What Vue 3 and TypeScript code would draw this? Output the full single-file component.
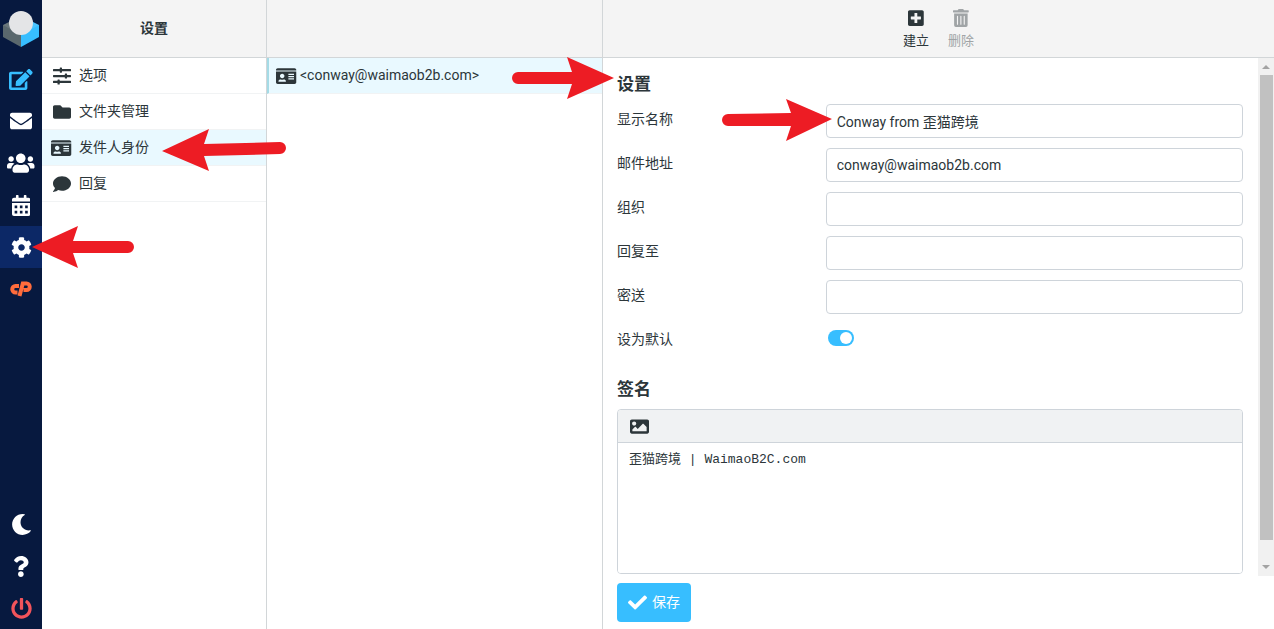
<script setup lang="ts">
import { ref } from 'vue'

interface Icon {
  w: number
  d: string
}

interface MenuEntry {
  label: string
  icon: string
}

interface Field {
  id: string
  label: string
  value: string
}

const icons: Record<string, Icon> = {
  edit: { w: 576, d: 'M402.6 83.2l90.2 90.2c3.8 3.8 3.8 10 0 13.8L274.4 405.6l-92.8 10.3c-12.4 1.4-22.9-9.1-21.5-21.5l10.3-92.8L388.8 83.2c3.8-3.8 10-3.8 13.8 0zm162-22.9l-48.8-48.8c-15.2-15.2-39.9-15.2-55.2 0l-35.4 35.4c-3.8 3.8-3.8 10 0 13.8l90.2 90.2c3.8 3.8 10 3.8 13.8 0l35.4-35.4c15.2-15.3 15.2-40 0-55.2zM384 346.2V448H64V128h229.8c3.2 0 6.2-1.3 8.5-3.5l40-40c7.6-7.6 2.2-20.5-8.5-20.5H48C21.5 64 0 85.5 0 112v352c0 26.5 21.5 48 48 48h352c26.5 0 48-21.5 48-48V306.2c0-10.7-12.9-16-20.5-8.5l-40 40c-2.2 2.3-3.5 5.3-3.5 8.5z' },
  mail: { w: 512, d: 'M502.3 190.8c3.9-3.1 9.7-.2 9.7 4.7V400c0 26.5-21.5 48-48 48H48c-26.5 0-48-21.5-48-48V195.6c0-5 5.7-7.8 9.7-4.7 22.4 17.4 52.1 39.5 154.1 113.6 21.1 15.4 56.7 47.8 92.2 47.6 35.7.3 72-32.8 92.3-47.6 102-74.1 131.6-96.3 154-113.7zM256 320c23.2.4 56.6-29.2 73.4-41.4 132.7-96.3 142.8-104.7 173.4-128.7 5.8-4.5 9.2-11.5 9.2-18.9v-19c0-26.5-21.5-48-48-48H48c-26.5 0-48 21.5-48 48v19c0 7.4 3.4 14.3 9.2 18.9 30.6 23.9 40.7 32.4 173.4 128.7 16.8 12.2 50.2 41.8 73.4 41.4z' },
  users: { w: 640, d: 'M96 224c35.3 0 64-28.7 64-64s-28.7-64-64-64-64 28.7-64 64 28.7 64 64 64zm448 0c35.3 0 64-28.7 64-64s-28.7-64-64-64-64 28.7-64 64 28.7 64 64 64zm32 32h-64c-17.6 0-33.5 7.1-45.1 18.6 40.3 22.1 68.9 62 75.1 109.4h66c17.7 0 32-14.3 32-32v-32c0-35.3-28.7-64-64-64zm-256 0c61.9 0 112-50.1 112-112S381.9 32 320 32 208 82.1 208 144s50.1 112 112 112zm76.8 32h-8.3c-20.8 10-43.9 16-68.5 16s-47.6-6-68.5-16h-8.3C179.6 288 128 339.6 128 403.2V432c0 26.5 21.5 48 48 48h288c26.5 0 48-21.5 48-48v-28.8c0-63.6-51.6-115.2-115.2-115.2zm-223.7-13.4C161.5 263.1 145.6 256 128 256H64c-35.3 0-64 28.7-64 64v32c0 17.7 14.3 32 32 32h65.9c6.3-47.4 34.9-87.3 75.2-109.4z' },
  calendar: { w: 448, d: 'M0 464c0 26.5 21.5 48 48 48h352c26.5 0 48-21.5 48-48V192H0v272zM320 256h64v64h-64zM320 384h64v64h-64zM192 256h64v64h-64zM192 384h64v64h-64zM64 256h64v64H64zM64 384h64v64H64zM400 64h-48V16c0-8.8-7.2-16-16-16h-32c-8.8 0-16 7.2-16 16v48H160V16c0-8.8-7.2-16-16-16h-32c-8.8 0-16 7.2-16 16v48H48C21.5 64 0 85.5 0 112v48h448v-48c0-26.5-21.5-48-48-48z' },
  cog: { w: 512, d: 'M487.4 315.7l-42.6-24.6c4.3-23.2 4.3-47 0-70.2l42.6-24.6c4.9-2.8 7.1-8.6 5.5-14-11.1-35.6-30-67.8-54.7-94.6-3.8-4.1-10-5.1-14.8-2.3L380.8 110c-17.9-15.4-38.5-27.3-60.8-35.1V25.8c0-5.6-3.9-10.5-9.4-11.7-36.7-8.2-74.3-7.8-109.2 0-5.5 1.2-9.4 6.1-9.4 11.7V75c-22.2 7.9-42.8 19.8-60.8 35.1L88.7 85.5c-4.9-2.8-11-1.9-14.8 2.3-24.7 26.7-43.6 58.9-54.7 94.6-1.7 5.4.6 11.2 5.5 14L67.3 221c-4.3 23.2-4.3 47 0 70.2l-42.6 24.6c-4.9 2.8-7.1 8.6-5.5 14 11.1 35.6 30 67.8 54.7 94.6 3.8 4.1 10 5.1 14.8 2.3l42.6-24.6c17.9 15.4 38.5 27.3 60.8 35.1v49.2c0 5.6 3.9 10.5 9.4 11.7 36.7 8.2 74.3 7.8 109.2 0 5.5-1.2 9.4-6.1 9.4-11.7v-49.2c22.2-7.9 42.8-19.8 60.8-35.1l42.6 24.6c4.9 2.8 11 1.9 14.8-2.3 24.7-26.7 43.6-58.9 54.7-94.6 1.5-5.5-.7-11.3-5.6-14.1zM256 336c-44.1 0-80-35.9-80-80s35.9-80 80-80 80 35.9 80 80-35.9 80-80 80z' },
  moon: { w: 512, d: 'M283.2 512c79 0 151.1-35.9 198.9-94.8 7-8.7-.7-21.4-11.6-19.3-124.2 23.6-238.3-71.6-238.3-197 0-72.2 38.7-138.6 101.5-174.4 9.7-5.5 7.3-20.2-3.7-22.2A258.2 258.2 0 0 0 283.2 0c-141.3 0-256 114.5-256 256 0 141.3 114.5 256 256 256z' },
  question: { w: 384, d: 'M202 0C122.2 0 70.5 32.7 29.9 91c-7.3 10.6-5.1 25.1 5.2 32.9l43.1 32.7c10.4 7.9 25.2 6 33.3-4.1 25-31.4 43.6-49.5 82.7-49.5 30.8 0 68.9 19.8 68.9 49.6 0 22.6-18.7 34.2-49 51.2-35.5 19.9-82.3 44.6-82.3 106.4V320c0 13.3 10.7 24 24 24h72.4c13.3 0 24-10.7 24-24v-5.8c0-42.8 125.3-44.6 125.3-160.6C377.5 66.3 286.9 0 202 0zM192 373.5c-38.2 0-69.3 31-69.3 69.2S153.8 512 192 512s69.3-31.1 69.3-69.3-31.1-69.2-69.3-69.2z' },
  power: { w: 512, d: 'M400 54.1c63 45 104 118.6 104 201.9 0 136.8-110.8 247.7-247.5 248C120 504.3 8.2 393 8 256.4 7.9 173.1 48.9 99.3 111.8 54.2c11.7-8.3 28-4.8 35 7.7L162.6 90c5.9 10.5 3.1 23.8-6.6 31-41.5 30.8-68 79.6-68 134.9-.1 92.3 74.5 168.1 168 168.1 91.6 0 168.6-74.2 168-169.1-.3-51.8-24.7-101.8-68.1-134-9.7-7.2-12.4-20.5-6.5-30.9l15.8-28.1c7-12.4 23.2-16.1 34.8-7.8zM296 264V24c0-13.3-10.7-24-24-24h-32c-13.3 0-24 10.7-24 24v240c0 13.3 10.7 24 24 24h32c13.3 0 24-10.7 24-24z' },
  sliders: { w: 512, d: 'M496 392H192v-24c0-8.8-7.2-16-16-16h-32c-8.8 0-16 7.2-16 16v24H16c-8.8 0-16 7.2-16 16v32c0 8.8 7.2 16 16 16h112v24c0 8.8 7.2 16 16 16h32c8.8 0 16-7.2 16-16v-24h304c8.8 0 16-7.2 16-16v-32c0-8.8-7.2-16-16-16zM496 224H400v-24c0-8.8-7.2-16-16-16h-32c-8.8 0-16 7.2-16 16v24H16c-8.8 0-16 7.2-16 16v32c0 8.8 7.2 16 16 16h320v24c0 8.8 7.2 16 16 16h32c8.8 0 16-7.2 16-16v-24h96c8.8 0 16-7.2 16-16v-32c0-8.8-7.2-16-16-16zM496 56H256V32c0-8.8-7.2-16-16-16h-32c-8.8 0-16 7.2-16 16v24H16C7.2 56 0 63.2 0 72v32c0 8.8 7.2 16 16 16h176v24c0 8.8 7.2 16 16 16h32c8.8 0 16-7.2 16-16v-24h240c8.8 0 16-7.2 16-16V72c0-8.8-7.2-16-16-16z' },
  folder: { w: 512, d: 'M464 128H272l-64-64H48C21.5 64 0 85.5 0 112v288c0 26.5 21.5 48 48 48h416c26.5 0 48-21.5 48-48V176c0-26.5-21.5-48-48-48z' },
  idcard: { w: 576, d: 'M528 32H48C21.5 32 0 53.5 0 80v16h576V80c0-26.5-21.5-48-48-48zM0 432c0 26.5 21.5 48 48 48h480c26.5 0 48-21.5 48-48V128H0v304zM352 192h160v32H352zM352 256h160v32H352zM352 320h160v32H352zM176 192c35.3 0 64 28.7 64 64s-28.7 64-64 64-64-28.7-64-64 28.7-64 64-64zM67.1 396.2C75.5 370.5 99.6 352 128 352h8.2c12.3 5.1 25.7 8 39.8 8s27.6-2.9 39.8-8h8.2c28.4 0 52.5 18.5 60.9 44.2 3.2 9.9-5.2 19.8-15.6 19.8H82.7c-10.4 0-18.8-10-15.6-19.8z' },
  comment: { w: 512, d: 'M256 32C114.6 32 0 125.1 0 240c0 49.6 21.4 95 57 130.7C44.5 421.1 2.7 466 2.2 466.5c-2.2 2.3-2.8 5.7-1.5 8.7S4.8 480 8 480c66.3 0 116-31.8 140.6-51.4 32.7 12.3 69 19.4 107.4 19.4 141.4 0 256-93.1 256-208S397.4 32 256 32z' },
  plus: { w: 448, d: 'M400 32H48C21.5 32 0 53.5 0 80v352c0 26.5 21.5 48 48 48h352c26.5 0 48-21.5 48-48V80c0-26.5-21.5-48-48-48zm-32 252c0 6.6-5.4 12-12 12h-92v92c0 6.6-5.4 12-12 12h-56c-6.6 0-12-5.4-12-12v-92H92c-6.6 0-12-5.4-12-12v-56c0-6.6 5.4-12 12-12h92v-92c0-6.6 5.4-12 12-12h56c6.6 0 12 5.4 12 12v92h92c6.6 0 12 5.4 12 12v56z' },
  trash: { w: 448, d: 'M32 464a48 48 0 0 0 48 48h288a48 48 0 0 0 48-48V128H32zm272-256a16 16 0 0 1 32 0v224a16 16 0 0 1-32 0zm-96 0a16 16 0 0 1 32 0v224a16 16 0 0 1-32 0zm-96 0a16 16 0 0 1 32 0v224a16 16 0 0 1-32 0zM432 32H312l-9.4-18.7A24 24 0 0 0 281.1 0H166.8a23.7 23.7 0 0 0-21.4 13.3L136 32H16A16 16 0 0 0 0 48v32a16 16 0 0 0 16 16h416a16 16 0 0 0 16-16V48a16 16 0 0 0-16-16z' },
  image: { w: 512, d: 'M464 448H48c-26.5 0-48-21.5-48-48V112c0-26.5 21.5-48 48-48h416c26.5 0 48 21.5 48 48v288c0 26.5-21.5 48-48 48zM112 120c-30.9 0-56 25.1-56 56s25.1 56 56 56 56-25.1 56-56-25.1-56-56-56zM64 384h384V272l-87.5-87.5c-4.7-4.7-12.3-4.7-17 0L208 320l-55.5-55.5c-4.7-4.7-12.3-4.7-17 0L64 336v48z' },
  check: { w: 512, d: 'M173.9 439.4l-166.4-166.4c-10-10-10-26.2 0-36.2l36.2-36.2c10-10 26.2-10 36.2 0L192 312.7 432.1 72.6c10-10 26.2-10 36.2 0l36.2 36.2c10 10 10 26.2 0 36.2l-294.4 294.4c-10 10-26.2 10-36.2 0z' },
}

const tasks: MenuEntry[] = [
  { label: '写邮件', icon: 'edit' },
  { label: '邮件', icon: 'mail' },
  { label: '联系人', icon: 'users' },
  { label: '日历', icon: 'calendar' },
  { label: '设置', icon: 'cog' },
]

const tools: MenuEntry[] = [
  { label: '深色模式', icon: 'moon' },
  { label: '帮助', icon: 'question' },
  { label: '退出', icon: 'power' },
]

const sections: MenuEntry[] = [
  { label: '选项', icon: 'sliders' },
  { label: '文件夹管理', icon: 'folder' },
  { label: '发件人身份', icon: 'idcard' },
  { label: '回复', icon: 'comment' },
]

const fields = ref<Field[]>([
  { id: 'name', label: '显示名称', value: 'Conway from 歪猫跨境' },
  { id: 'email', label: '邮件地址', value: 'conway@waimaob2b.com' },
  { id: 'organization', label: '组织', value: '' },
  { id: 'reply-to', label: '回复至', value: '' },
  { id: 'bcc', label: '密送', value: '' },
])

const isDefault = ref(true)
const signature = ref('歪猫跨境 | WaimaoB2C.com')
const activeTask = ref('cog')
const activeSection = ref('idcard')
</script>

<template>
  <div class="layout">
    <nav class="taskbar" aria-label="任务">
      <a class="brand" href="#" aria-label="主页">
        <svg viewBox="0 0 36 36">
          <path class="cube-left" d="M0 14 6 11 18 14v22L0 26z" />
          <path class="cube-right" d="M36 14 30 11 18 14v22l18-10z" />
          <path class="cube-edge" d="M0 14 6 11 18 17v7zM36 14 30 11 18 17v7z" />
          <circle class="ball" cx="18" cy="12" r="12" />
        </svg>
      </a>
      <a
        v-for="task in tasks"
        :key="task.icon"
        href="#"
        :class="['task', task.icon, { active: task.icon === activeTask }]"
        :aria-label="task.label"
        @click.prevent="activeTask = task.icon"
      >
        <svg :viewBox="`0 0 ${icons[task.icon].w} 512`"><path fill-rule="evenodd" :d="icons[task.icon].d" /></svg>
      </a>
      <a class="task cpanel" href="#" aria-label="cPanel">
        <svg viewBox="0 0 22 16">
          <path d="M9 5H5.500a3.200 3.200 0 0 0 0 6.500H7.500" />
          <path d="M9.500 15 12.800 2.500H16.500a3.200 3.200 0 0 1 0 6.500H13.500" />
        </svg>
      </a>
      <span class="spring"></span>
      <a v-for="tool in tools" :key="tool.icon" href="#" :class="['task', tool.icon]" :aria-label="tool.label">
        <svg :viewBox="`0 0 ${icons[tool.icon].w} 512`"><path fill-rule="evenodd" :d="icons[tool.icon].d" /></svg>
      </a>
    </nav>

    <section class="column sections">
      <header class="bar"><h1>设置</h1></header>
      <ul>
        <li v-for="item in sections" :key="item.icon" :class="{ active: item.icon === activeSection }">
          <a href="#" @click.prevent="activeSection = item.icon">
            <span :class="['glyph', item.icon]">
              <svg :viewBox="`0 0 ${icons[item.icon].w} 512`"><path fill-rule="evenodd" :d="icons[item.icon].d" /></svg>
            </span>
            {{ item.label }}
          </a>
        </li>
      </ul>
    </section>

    <section class="column identities">
      <header class="bar"></header>
      <ul>
        <li class="active selected">
          <a href="#">
            <span class="glyph idcard">
              <svg viewBox="0 0 576 512"><path fill-rule="evenodd" :d="icons.idcard.d" /></svg>
            </span>
            &lt;conway@waimaob2b.com&gt;
          </a>
        </li>
      </ul>
    </section>

    <main class="content">
      <header class="bar actions">
        <button type="button">
          <svg viewBox="0 0 448 512"><path :d="icons.plus.d" /></svg>
          建立
        </button>
        <button type="button" disabled>
          <svg viewBox="0 0 448 512"><path fill-rule="evenodd" :d="icons.trash.d" /></svg>
          删除
        </button>
      </header>
      <div class="viewport">
        <form id="identity" @submit.prevent>
          <h2>设置</h2>
          <div v-for="field in fields" :key="field.id" class="row">
            <label :for="field.id">{{ field.label }}</label>
            <input :id="field.id" v-model="field.value" type="text" />
          </div>
          <div class="row">
            <label for="default">设为默认</label>
            <input id="default" v-model="isDefault" class="switch" type="checkbox" />
          </div>
          <h2>签名</h2>
          <div class="editor">
            <div class="toolbar">
              <button type="button" aria-label="插入图片">
                <svg viewBox="0 0 512 512"><path fill-rule="evenodd" :d="icons.image.d" /></svg>
              </button>
            </div>
            <textarea v-model="signature" aria-label="签名" spellcheck="false"></textarea>
          </div>
        </form>
        <div class="scrollbar" aria-hidden="true">
          <span class="up"></span>
          <span class="thumb"></span>
          <span class="down"></span>
        </div>
      </div>
      <footer>
        <button class="save" type="submit" form="identity">
          <svg viewBox="0 0 512 512"><path :d="icons.check.d" /></svg>
          保存
        </button>
      </footer>
    </main>

    <svg class="arrow to-section" viewBox="0 0 124 42">
      <path d="M0 22 47 0 42 15 118 13a6 6 0 0 1 0 12L42 27 47 42z" />
    </svg>
    <svg class="arrow to-task" viewBox="0 0 102 42">
      <path d="M0 21 46 0 41 15 96 15a6 6 0 0 1 0 12L41 27 46 42z" />
    </svg>
    <svg class="arrow to-form" viewBox="0 0 102 42">
      <path d="M102 21 55 0 60 15 6 15a6 6 0 0 0 0 12L60 27 55 42z" />
    </svg>
    <svg class="arrow to-name" viewBox="0 0 110 42">
      <path d="M110 20 64 0 69 14 6 15a6 6 0 0 0 0 12L69 27 64 42z" />
    </svg>
  </div>
</template>

<style>
body {
  margin: 0;
}
</style>

<style scoped>
.layout {
  position: relative;
  display: flex;
  height: 100vh;
  overflow: hidden;
  background: #fff;
  color: #2c363a;
  font: 14px/21px Roboto, "Noto Sans CJK SC", sans-serif;
}

.layout * {
  box-sizing: border-box;
}

svg {
  display: block;
  fill: currentColor;
}

a {
  color: inherit;
  text-decoration: none;
}

button,
input,
textarea {
  font: inherit;
  color: inherit;
}

.taskbar {
  display: flex;
  flex: 0 0 42px;
  flex-direction: column;
  background: #07193f;
  color: #fff;
}

.brand {
  display: flex;
  height: 58px;
  align-items: center;
  justify-content: center;
}

.brand svg {
  width: 36px;
  height: 36px;
}

.cube-left {
  fill: #5a686d;
}

.cube-right {
  fill: #37beff;
}

.cube-edge {
  fill: #fff;
  fill-opacity: 0.1;
}

.ball {
  fill: #e4e5e7;
}

.task {
  display: flex;
  flex: 0 0 42px;
  align-items: center;
  justify-content: center;
}

.task svg {
  height: 21px;
}

.task.mail svg,
.task.users svg {
  height: 22px;
}

.task.edit {
  color: #37beff;
}

.task.active {
  background: #0c2866;
}

.task.power {
  color: #f2545b;
}

.task.cpanel svg {
  width: 22px;
  height: 16px;
  fill: none;
  stroke: #ff6c3c;
  stroke-width: 4;
}

.spring {
  flex: 1;
}

.column {
  border-right: 1px solid #d2d6d8;
}

.sections {
  flex: 0 0 225px;
}

.identities {
  flex: 0 0 336px;
}

.bar {
  display: flex;
  height: 58px;
  align-items: center;
  justify-content: center;
  border-bottom: 1px solid #d2d6d8;
  background: #f4f4f4;
}

h1 {
  margin: 0;
  font-size: 14px;
  font-weight: 700;
}

ul {
  margin: 0;
  padding: 0;
  list-style: none;
}

li {
  border-bottom: 1px solid #f1f3f4;
}

li a {
  display: flex;
  height: 35px;
  align-items: center;
  gap: 7px;
  padding-left: 9px;
}

li.active {
  background: #e9f9ff;
}

li.selected {
  border-left: 2px solid #a5dbe6;
}

.selected a {
  gap: 3px;
  padding-left: 7px;
}

.glyph {
  display: flex;
  width: 21px;
  justify-content: center;
}

.glyph svg {
  height: 18px;
}

.content {
  display: flex;
  flex: 1;
  flex-direction: column;
  min-width: 0;
}

.actions {
  gap: 19px;
}

.actions button {
  display: flex;
  flex-direction: column;
  align-items: center;
  gap: 3px;
  padding: 3px 0 0;
  border: 0;
  background: none;
  font-size: 13px;
}

.actions button:disabled {
  color: #a0a4a6;
}

.actions svg {
  height: 18px;
}

.viewport {
  display: flex;
  flex: 1;
  min-height: 0;
}

form {
  flex: 1;
  padding: 14px 15px 0 14px;
}

h2 {
  margin: 0 0 8px;
  font-size: 17px;
  font-weight: 700;
  line-height: 24px;
}

.row {
  display: grid;
  grid-template-columns: 1fr 2fr;
  align-items: start;
  min-height: 34px;
  margin-bottom: 10px;
}

.row label {
  padding-top: 5px;
}

.row input[type="text"] {
  width: 100%;
  height: 34px;
  padding: 0 10px 1px;
  border: 1px solid #ced4da;
  border-radius: 4px;
  background: #fff;
  outline: none;
}

.switch {
  position: relative;
  width: 26px;
  height: 16px;
  margin: 6px 2px;
  border-radius: 8px;
  background: #ced4da;
  appearance: none;
}

.switch::after {
  position: absolute;
  top: 2px;
  left: 2px;
  width: 12px;
  height: 12px;
  border-radius: 50%;
  background: #fff;
  content: "";
}

.switch:checked {
  background: #37beff;
}

.switch:checked::after {
  left: 12px;
}

.row + h2 {
  margin-top: 19px;
}

.editor {
  border: 1px solid #ced4da;
  border-radius: 4px;
  overflow: hidden;
}

.toolbar {
  display: flex;
  height: 33px;
  align-items: center;
  padding-left: 12px;
  border-bottom: 1px solid #ced4da;
  background: #f0f2f3;
}

.toolbar button {
  padding: 0;
  border: 0;
  background: none;
}

.toolbar svg {
  height: 19px;
}

textarea {
  display: block;
  width: 100%;
  height: 130px;
  padding: 6px 11px;
  border: 0;
  background: #fff;
  outline: none;
  resize: none;
  font: 13px/21px "Liberation Mono", "Noto Sans CJK SC", monospace;
}

.scrollbar {
  display: flex;
  flex: 0 0 16px;
  flex-direction: column;
  align-items: center;
  padding: 7px 0;
  background: #f1f1f1;
}

.up,
.down {
  border: 4px solid transparent;
}

.up {
  border-top: 0;
  border-bottom-color: #a3a3a3;
}

.down {
  border-bottom: 0;
  border-top-color: #a3a3a3;
}

.thumb {
  flex: 1;
  width: 13px;
  margin: 6px 0 25px;
  background: #c1c1c1;
}

footer {
  padding: 7px 14px;
}

.save {
  display: flex;
  height: 39px;
  align-items: center;
  gap: 5px;
  padding: 0 11px;
  border: 0;
  border-radius: 4px;
  background: #37beff;
  color: #fff;
}

.save svg {
  height: 19px;
}

.arrow {
  position: absolute;
  height: 42px;
  fill: #ed1c24;
  pointer-events: none;
}

.to-section {
  top: 129px;
  left: 162px;
}

.to-task {
  top: 226px;
  left: 32px;
}

.to-form {
  top: 57px;
  left: 512px;
}

.to-name {
  top: 99px;
  left: 722px;
}
</style>
